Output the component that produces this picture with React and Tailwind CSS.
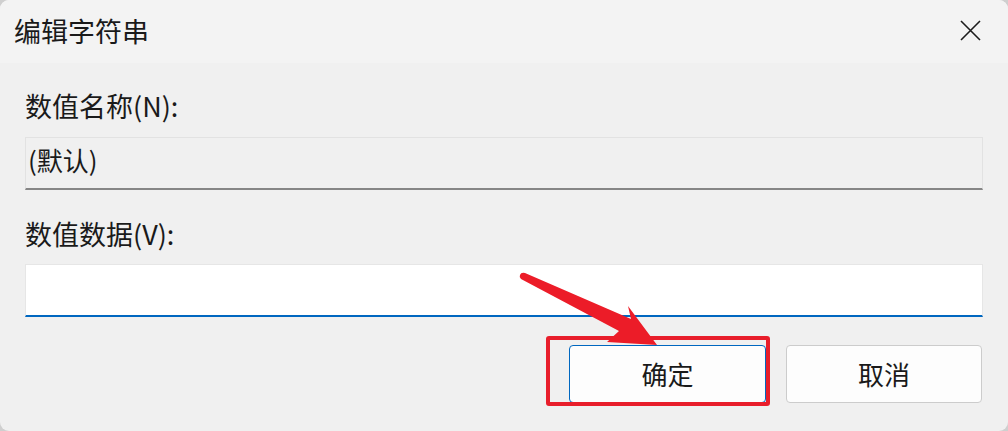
import React from 'react';

// Boîte de dialogue "Modifier la chaîne" (style Windows 11)
const FONT = { fontFamily: '"Noto Sans CJK SC", "Noto Sans", sans-serif' };

const Field = ({ value, focused }) => (
  <div
    className={`h-[53px] flex items-start pt-[7px] px-[2px] text-[26px] leading-[30px] text-[#1a1a1a] border border-b-2 ${
      focused
        ? 'bg-white border-[#e6e6e6] border-b-[#0067c0] h-[52px]'
        : 'bg-[#f0f0f0] border-[#e2e2e2] border-b-[#868686]'
    }`}
  >
    {value}
  </div>
);

const App = () => {
  return (
    <div className="w-[1008px] h-[431px] bg-[#cfcfcf] relative overflow-hidden" style={FONT}>
      <div className="w-full h-full rounded-[9px] overflow-hidden bg-[#f0f0f0] flex flex-col">
        {/* Barre de titre */}
        <div className="h-[63px] bg-[#f3f3f3] flex items-center justify-between pl-[14px] pr-[27px]">
          <span className="text-[27px] leading-none text-[#1a1a1a] pb-[3px]">编辑字符串</span>
          <svg width="21" height="21" viewBox="0 0 21 21" className="mt-[-3px]">
            <path d="M1 1 L20 20 M20 1 L1 20" stroke="#1c1c1c" strokeWidth="1.6" fill="none" />
          </svg>
        </div>

        {/* Contenu */}
        <div className="px-[25px] flex flex-col">
          <div className="mt-[28px] h-[30px] text-[27px] leading-[30px] text-[#1a1a1a]">数值名称(N):</div>
          <div className="mt-[16px]">
            <Field value="(默认)" />
          </div>
          <div className="mt-[29px] h-[30px] text-[27px] leading-[30px] text-[#1a1a1a]">数值数据(V):</div>
          <div className="mt-[15px]">
            <Field value="" focused />
          </div>
        </div>

        {/* Boutons */}
        <div className="mt-[28px] flex justify-end gap-[20px] pr-[26px]">
          <button className="w-[197px] h-[58px] rounded-[4px] border border-[#0067c0] bg-[#fdfdfd] text-[26px] text-[#1a1a1a] leading-none">
            确定
          </button>
          <button className="w-[196px] h-[58px] rounded-[4px] border border-[#cccccc] bg-[#fdfdfd] text-[26px] text-[#1a1a1a] leading-none">
            取消
          </button>
        </div>
      </div>

      {/* Annotation : cadre rouge */}
      <div className="absolute left-[546px] top-[336px] w-[224px] h-[70px] border-[4px] border-[#e81e2b] rounded-[3px] pointer-events-none" />

      {/* Annotation : flèche rouge */}
      <svg className="absolute left-0 top-0 pointer-events-none" width="1008" height="431">
        <path
          d="M520 275 Q521 272 525 273 L631 319 L628 306 L657 345 L607 342 L619 331 L521 279 Q519 277 520 275 Z"
          fill="#ec1c28"
        />
      </svg>
    </div>
  );
};

export default App;
